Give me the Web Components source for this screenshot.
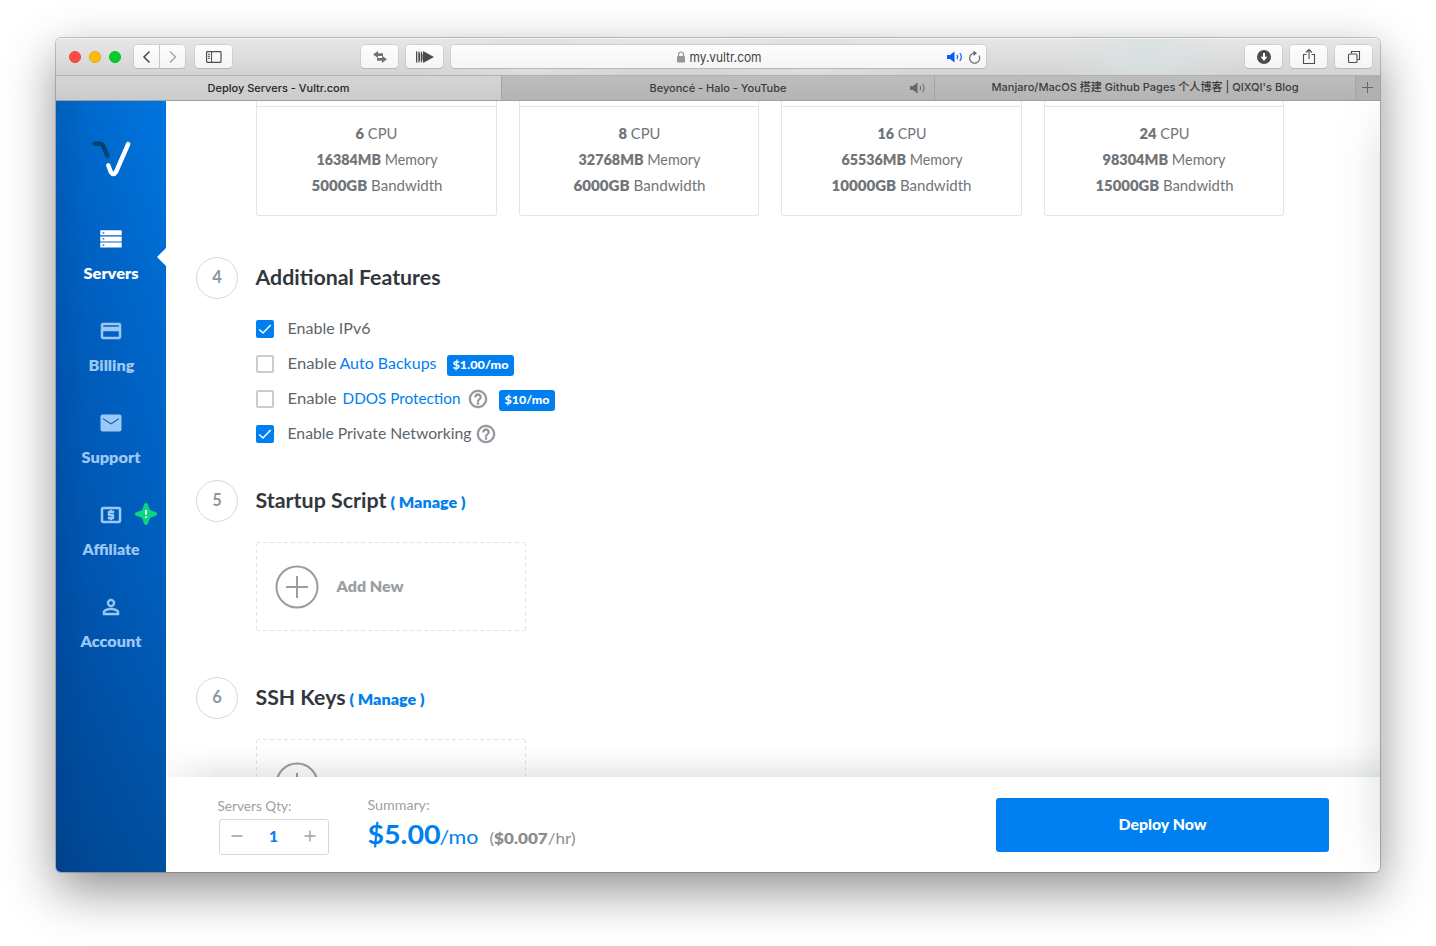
<!DOCTYPE html>
<html lang="en">
<head>
<meta charset="utf-8">
<title>Deploy Servers - Vultr.com</title>
<style>
html,body{margin:0;height:100%;background:#fff;overflow:hidden}
body{font-family:Lato,"Noto Sans CJK SC",sans-serif;box-sizing:border-box;padding:38px 56px 74px}
</style>
</head>
<body>
<app-window></app-window>
<script>
const define = (name, html, setup) => customElements.define(name, class extends HTMLElement {
  connectedCallback() {
    if (this.shadowRoot) return;
    const t = document.createElement('template');
    t.innerHTML = typeof html === 'function' ? html(this) : html;
    this.attachShadow({mode: 'open'}).append(t.content.cloneNode(true));
    if (setup) setup(this);
  }
});

define('tool-button', `
<style>
:host{display:flex;box-sizing:border-box;width:37px;height:23px;border-radius:4px;background:linear-gradient(#fdfdfd,#f5f5f5);box-shadow:0 0 0 .5px #bdbdbd,0 1px 0 #b2b2b2;align-items:center;justify-content:center;color:#4d4d4d}
</style><slot></slot>`);

define('browser-toolbar', `
<style>
:host{--dy:0px;display:flex;align-items:center;height:37px;border-bottom:1px solid #b1b1b1;padding:0 8px 0 13px;box-sizing:content-box;
background:radial-gradient(ellipse 110px 40px at 475px 20px,#dbe1e2,transparent),radial-gradient(ellipse 110px 40px at 755px 20px,#dbe1e2,transparent),radial-gradient(ellipse 90px 40px at 1090px 20px,#d9e0e0,transparent),linear-gradient(#e7e7e7,#d3d3d3);box-shadow:inset 0 1px #f3f3f3}
i{width:12px;height:12px;border-radius:50%;box-sizing:border-box;margin-right:8px}
.r{background:#ff4b43;border:1px solid #e8403a}.y{background:#ffbd05;border:1px solid #e8a905}.g{background:#00cf26;border:1px solid #06bb22;margin-right:13px}
.b{width:25px;border-radius:4px 0 0 4px}.f{width:25px;border-radius:0 4px 4px 0;margin:0 10px 0 1px}
.swap{margin:0 8px 0 129px}.url{width:535px;margin:0 259px 0 8px;display:grid;grid-template-columns:1fr auto 1fr;align-items:center}
.t{display:flex;align-items:center;gap:4px;font:13px Inter,sans-serif;color:#3f3f3f}
.e{display:flex;justify-content:flex-end;align-items:center;gap:4px;padding-right:5px}
.m{margin-left:8px}svg{display:block;fill:none;stroke:currentColor}
</style>
<i class="r"></i><i class="y"></i><i class="g"></i>
<tool-button class="b"><svg width="12" height="16" stroke-width="1.6"><path d="M8.500 2.500 3 8l5.500 5.500"/></svg></tool-button>
<tool-button class="f"><svg width="12" height="16" stroke-width="1.4" style="color:#a5a5a5"><path d="M3 2.500 8.500 8l-5.500 5.500"/></svg></tool-button>
<tool-button><svg width="16" height="14"><rect x=".6" y="1.6" width="14.4" height="10.8" rx=".8" stroke-width="1.2"/><path d="M5.6 2v10M2 4.3h2M2 6.3h2M2 8.3h2" /></svg></tool-button>
<tool-button class="swap"><svg width="16" height="14" style="stroke:none;fill:#727272"><path d="M1 4.500 6 1v2.200h5v2.700H6V8zM15 9.300l-5 3.700v-2.300H5V8h5V5.800z"/></svg></tool-button>
<tool-button><svg width="18" height="14" style="stroke:none;fill:#4b4b4b"><path d="M0 1.500h1.300v11H0zM2.300 1.500h1l.8 3v5l-.8 3h-1zM4.800 1.500h.8l1 3v5l-1 3h-.8zM7 1l11 6-11 6z"/></svg></tool-button>
<tool-button class="url" style="display:grid"><span></span><span class="t"><svg width="9" height="12" style="stroke:none;fill:#979797"><rect x="0" y="5" width="8" height="6.500" rx=".8"/><path d="M1.500 5.500V3.500a2.500 2.500 0 0 1 5 0v2" fill="none" stroke="#979797" stroke-width="1.200"/></svg><fit-text w="71">my.vultr.com</fit-text></span>
<span class="e"><svg width="17" height="12" style="color:#0a5cff"><path d="M0 4h3l4.500-3.500v11L3 8H0z" fill="#0a5cff" stroke="none"/><path d="M10 3.800q1.500 2.200 0 4.400M12.800 2q3 4 0 8" stroke-width="1.200"/></svg><svg width="13" height="14" style="color:#6c6c6c"><path d="M10.900 5.500A5 5 0 1 1 6 3.200h2" stroke-width="1.200"/><path d="M5.500.500 9 3.200 5.500 6z" fill="#6c6c6c" stroke="none"/></svg></span></tool-button>
<tool-button><svg width="16" height="16"><circle cx="8" cy="8" r="7" fill="#4b4b4b" stroke="none"/><path d="M8 4v4.500" stroke="#fff" stroke-width="2"/><path d="M4.500 7.800h7L8 12z" fill="#fff" stroke="none"/></svg></tool-button>
<tool-button class="m"><svg width="14" height="18" stroke-width="1.100"><path d="M4.500 6.500h-3v9h11v-9h-3M7 11V1.500M4 4.500l3-3 3 3"/></svg></tool-button>
<tool-button class="m"><svg width="14" height="14" stroke-width="1.100"><rect x="1.500" y="4" width="8.500" height="8.500" rx="1"/><path d="M4.500 3.500V1.500h8v8h-2"/></svg></tool-button>
`);

define('browser-tabs', `
<style>
:host{--dy:0px;display:flex;height:24px;border-bottom:1px solid #9f9f9f;font:500 11px/14px Inter,"Noto Sans CJK SC",sans-serif;color:#3c3c3c;background:linear-gradient(#bdbdbd,#b4b4b4)}
div{display:flex;align-items:center;justify-content:center;border-right:1px solid #a3a3a3;box-sizing:border-box;position:relative}
.a{width:446px;background:linear-gradient(#d5d5d5,#cbcbcb);color:#262626}.b{width:433px}.c{width:421px;--dy:-1px}.d{width:24px;border:0;background:#b0b0b0}
svg{fill:none;stroke:#666}.b svg{position:absolute;right:7px;top:6px}
</style>
<div class="a"><fit-text w="141">Deploy Servers - Vultr.com</fit-text></div>
<div class="b"><fit-text w="136">Beyoncé - Halo - YouTube</fit-text><svg width="17" height="12"><path d="M0 4h3l4.500-3.500v11L3 8H0z" fill="#666" stroke="none"/><path d="M10 3.800q1.500 2.200 0 4.400M12.800 2q3 4 0 8"/></svg></div>
<div class="c"><fit-text w="306">Manjaro/MacOS 搭建 Github Pages 个人博客 | QIXQI's Blog</fit-text></div>
<div class="d"><svg width="12" height="12"><path d="M5.500 0v11M0 5.500h11" stroke-width="1"/></svg></div>`);

define('nav-item', e => `
<style>
:host{display:flex;flex-direction:column;align-items:center;height:92px;color:#9cc8f5;position:relative;font-weight:800;font-size:15px}
:host([active]){color:#fff}
svg{display:block;width:24px;height:24px;fill:currentColor;fill-rule:evenodd}
:host([heavy]) svg{stroke:currentColor;stroke-width:.5}
.l{height:22px;line-height:22px;margin-top:12px}
.p{position:absolute;right:0;top:21px;border:9.500px solid transparent;border-right-color:#fff;border-left:0}
</style>
<svg viewBox="0 0 24 24"><path d="${e.getAttribute('icon')}"/></svg><span class="l"><fit-text w="${e.getAttribute('w')}">${e.getAttribute('label')}</fit-text></span>
${e.hasAttribute('active') ? '<span class="p"></span>' : ''}<slot></slot>`);

define('side-bar', `
<style>
:host{display:block;width:110px;box-sizing:border-box;padding-top:36px;flex:none;
background:linear-gradient(90deg,rgba(0,20,75,.24),rgba(0,20,75,.13) 30px,rgba(0,20,75,.09) 55px,transparent),linear-gradient(184deg,#0076e0 0,#0068cd 30%,#005fbf 60%,#004f9f 100%)}
.logo{display:block;margin:0 auto 54px;width:44px;height:44px}
.n{margin-top:-8px;display:block}
.s{position:absolute;left:78px;top:-1px;width:24px;height:24px}
</style>
<svg class="logo" viewBox="0 0 44 44" fill="none" stroke-linecap="round" stroke-linejoin="round" stroke-width="4.400"><path d="M5.500 6.800h6q1.600 0 2.300 1.500L18.500 19" stroke="#00456f" stroke-linecap="round"/><path d="M39.200 7 27 35q-2.600 4-5.200 0L19.300 28.200" stroke="#fff"/></svg>
<div class="n">
<nav-item active label="Servers" w="54" icon="M1.300 3.200h21.400v5H1.300zM3.600 5.200v1.200h1.700V5.200zM1.300 9.400h21.400v5H1.300zM3.600 11.300v1.200h1.700v-1.200zM1.300 15.600h21.400v5H1.300zM3.600 17.500v1.200h1.700v-1.200z"></nav-item>
<nav-item heavy label="Billing" w="45" icon="M20 4H4C2.890 4 2.010 4.890 2.010 6L2 18c0 1.110.890 2 2 2h16c1.110 0 2-.890 2-2V6c0-1.110-.890-2-2-2zm0 14H4v-6h16v6zm0-10H4V6h16v2z"></nav-item>
<nav-item label="Support" w="58" icon="M20.500 3.500h-17c-1.100 0-2 .900-2 2v13c0 1.100.900 2 2 2h17c1.100 0 2-.900 2-2v-13c0-1.100-.900-2-2-2zM20 7l-8 5.200L4 7v1.200l8 5.200 8-5.200z"></nav-item>
<nav-item heavy label="Affiliate" w="56" icon="M11 17h2v-1h1c.550 0 1-.450 1-1v-3c0-.550-.450-1-1-1h-3v-1h4V8h-2V7h-2v1h-1c-.550 0-1 .450-1 1v3c0 .550.450 1 1 1h3v1H9v2h2v1zm9-13H4c-1.110 0-1.990.890-1.990 2L2 18c0 1.110.890 2 2 2h16c1.110 0 2-.890 2-2V6c0-1.110-.890-2-2-2zm0 14H4V6h16v12z"><svg class="s" viewBox="0 0 24 24"><path d="M12 1c1.400 0 2 1 2.500 3.200l1.300 3.400q.3.700 1 1l3.200 1c2.300.700 3 1.200 3 2.400s-.700 1.700-3 2.400l-3.200 1q-.7.300-1 1L14.500 20c-.5 2-1.100 3-2.500 3s-2-1-2.500-3l-1.300-3.600q-.3-.7-1-1l-3.200-1C1.700 13.700 1 13.200 1 12s.700-1.700 3-2.400l3.200-1q.7-.3 1-1l1.300-3.400C10 2 10.600 1 12 1z" fill="#0cd57e"/><path d="M12 8v4.500M12 14.500v1.500" stroke="#fff" stroke-width="2"/></svg></nav-item>
<nav-item heavy label="Account" w="60" icon="M12 5.900c1.160 0 2.100.940 2.100 2.100s-.940 2.100-2.100 2.100S9.900 9.160 9.900 8s.940-2.100 2.100-2.100m0 9c2.970 0 6.100 1.460 6.100 2.100v1.100H5.900V17c0-.640 3.130-2.100 6.100-2.100M12 4C9.790 4 8 5.790 8 8s1.790 4 4 4 4-1.790 4-4-1.790-4-4-4zm0 9c-2.670 0-8 1.340-8 4v3h16v-3c0-2.660-5.330-4-8-4z"></nav-item>
</div>`);

define('plan-card', e => {
  const rows = e.getAttribute('rows').split(',').map(r => r.split(':'));
  return `<style>
:host{display:block;box-sizing:border-box;height:115px;border:1px solid #e3e5e8;border-top:0;border-radius:0 0 3px 3px;color:#717579;font-size:15px;text-align:center}
header{height:5px;border-bottom:1px solid #e3e5e8;margin-bottom:14px}
p{margin:0;height:26px;line-height:26px}b{font-weight:800}
</style><header></header>` + rows.map(([n, u, w]) => `<p><fit-text w="${w}"><b>${n}</b> ${u}</fit-text></p>`).join('');
});

define('step-head', e => `
<style>
:host{display:flex;align-items:center;height:42px;color:#32373d;font-weight:700;font-size:20.500px}
i{font-style:normal;font-size:16.500px;font-weight:700;color:#8d979f;width:42px;height:42px;box-sizing:border-box;border:1px solid #d3dae0;border-radius:50%;text-align:center;line-height:39px;margin-right:18px}
.m{color:#007fec;font-size:15px;font-weight:800;margin-left:5px}
.t{display:flex;align-items:baseline}
</style>
<i>${e.getAttribute('n')}</i><span class="t"><fit-text w="${e.getAttribute('w')}">${e.getAttribute('label')}</fit-text>
${e.hasAttribute('manage') ? '<fit-text class="m" w="74">( Manage )</fit-text>' : ''}</span>`);

define('check-row', e => `
<style>
:host{display:flex;align-items:center;height:35px;font-size:15.500px;color:#5f6469}
.c{width:18px;height:18px;box-sizing:border-box;border:2px solid #c9cccf;border-radius:2px;margin-right:14px}
:host([checked]) .c{background:#0080f0;border-color:#0080f0}
svg{display:block;margin:0}
</style>
<span class="c">${e.hasAttribute('checked') ? '<svg width="14" height="14" fill="none" stroke="#fff" stroke-width="1.500"><path d="m1.200 7.500 3.800 3.500 7.700-8"/></svg>' : ''}</span><slot></slot>`);

define('help-icon', `
<style>:host{display:block;width:18px;height:18px}svg{display:block;overflow:visible}</style>
<svg width="18" height="18" viewBox="2 2 20 20" fill="#8e949a" stroke="#8e949a" stroke-width=".5"><path d="M11 18h2v-2h-2v2zm1-16C6.480 2 2 6.480 2 12s4.480 10 10 10 10-4.480 10-10S17.520 2 12 2zm0 18c-4.410 0-8-3.590-8-8s3.590-8 8-8 8 3.590 8 8-3.590 8-8 8zm0-14c-2.210 0-4 1.790-4 4h2c0-1.100.900-2 2-2s2 .900 2 2c0 2-3 1.750-3 5h2c0-2.250 3-2.500 3-5 0-2.210-1.790-4-4-4z"/></svg>`);

define('price-badge', `
<style>:host{--dy:0px;display:block;height:21px;box-sizing:border-box;margin-top:3px;background:#0080f0;border-radius:3px;color:#fff;font-size:11px;font-weight:900;line-height:20px;padding:0 6px}</style><slot></slot>`);

define('add-box', `
<style>
:host{display:flex;align-items:center;box-sizing:border-box;width:270px;height:89px;font-size:15px;font-weight:800;color:#9a9fa4;background:repeating-linear-gradient(90deg,#e1e3e5 0 4px,transparent 4px 7px) 0 0/100% 1px no-repeat,repeating-linear-gradient(90deg,#e1e3e5 0 4px,transparent 4px 7px) 0 100%/100% 1px no-repeat,repeating-linear-gradient(#e1e3e5 0 4px,transparent 4px 7px) 0 0/1px 100% no-repeat,repeating-linear-gradient(#e1e3e5 0 4px,transparent 4px 7px) 100% 0/1px 100% no-repeat;padding-left:19px;border-radius:3px}
svg{margin-right:18px}
</style>
<svg width="44" height="44" fill="none" stroke="#979da3" stroke-width="2"><circle cx="22" cy="22" r="20.500"/><path d="M22 11v22M11 22h22"/></svg><fit-text w="66">Add New</fit-text>`);

define('deploy-form', `
<style>
:host{display:block;flex:1;min-height:0;overflow:hidden;padding-left:30px;position:relative}
.cards{display:grid;grid-template-columns:241px 240px 241px 240px;gap:22px;margin:0 0 41px 60px}
.in{margin-left:60px}
.rows{margin:12px 0 29px 60px}
a{color:#007fec}
.shade{position:absolute;inset:auto 0 0 0;height:36px;background:linear-gradient(transparent,rgba(40,60,55,.025) 40%,rgba(40,60,55,.11));-webkit-mask:linear-gradient(90deg,rgba(0,0,0,.3),#000 50px)}
</style>
<div class="cards">
<plan-card rows="6:CPU:41,16384MB:Memory:120,5000GB:Bandwidth:130"></plan-card>
<plan-card rows="8:CPU:41,32768MB:Memory:121,6000GB:Bandwidth:131"></plan-card>
<plan-card rows="16:CPU:48,65536MB:Memory:120,10000GB:Bandwidth:139"></plan-card>
<plan-card rows="24:CPU:49,98304MB:Memory:122,15000GB:Bandwidth:137"></plan-card>
</div>
<step-head n="4" label="Additional Features" w="184"></step-head>
<div class="rows">
<check-row checked><fit-text w="82">Enable IPv6</fit-text></check-row>
<check-row><fit-text w="48">Enable</fit-text><a style="margin:0 11px 0 4px"><fit-text w="96">Auto Backups</fit-text></a><price-badge><fit-text w="55">$1.00/mo</fit-text></price-badge></check-row>
<check-row><fit-text w="48">Enable</fit-text><a style="margin:0 9px 0 7px"><fit-text w="117">DDOS Protection</fit-text></a><help-icon style="margin-right:12px"></help-icon><price-badge><fit-text w="44">$10/mo</fit-text></price-badge></check-row>
<check-row checked><fit-text w="183" style="margin-right:6px">Enable Private Networking</fit-text><help-icon></help-icon></check-row>
</div>
<step-head n="5" label="Startup Script" w="130" manage></step-head>
<add-box class="in" style="margin-top:20px;margin-bottom:46px"></add-box>
<step-head n="6" label="SSH Keys" w="89" manage></step-head>
<add-box class="in" style="margin-top:20px"></add-box>
<div class="shade"></div>`);

define('deploy-footer', `
<style>
:host{--dy:0px;display:flex;height:95px;box-sizing:border-box;background:#fff;padding:21px 51px 0 52px;color:#9a9fa4;font-size:13px;line-height:16px}
.q{width:150px}.box{box-sizing:border-box;width:110px;height:36px;margin:5px 0 0 1px;border:1px solid #d5d8da;border-radius:3px;display:flex;align-items:center;justify-content:space-between;padding:0 12px 2px 11px;font-size:15.500px;font-weight:900;color:#0080f0}
.lab{height:16px}.s{flex:1;margin-top:-1px}
.p{display:flex;align-items:baseline;color:#0080f0;font-size:26px;font-weight:700;line-height:34px;margin-top:4px}
.u{font-size:20px;font-weight:400;margin-right:12px}.h{font-size:15.500px;font-weight:400;color:#8e8e8e}
button{--dy:-1px;border:0;width:333px;height:54px;border-radius:3px;background:#0080f0;color:#fff;font:900 15px Lato,sans-serif;padding:0}
</style>
<div class="q"><div class="lab"><fit-text w="73">Servers Qty:</fit-text></div><div class="box"><svg width="12" height="12" stroke="#9a9fa4" stroke-width="1.400"><path d="M.500 6h11"/></svg><span>1</span><svg width="12" height="12" stroke="#9a9fa4" stroke-width="1.400"><path d="M.500 6h11M6 .500v11"/></svg></div></div>
<div class="s"><div class="lab"><fit-text w="61">Summary:</fit-text></div><div class="p"><fit-text w="72">$5.00</fit-text><fit-text class="u" w="38">/mo</fit-text><fit-text class="h" w="85">(<b style="font-weight:800">$0.007</b>/hr)</fit-text></div></div>
<button><fit-text w="87">Deploy Now</fit-text></button>`);

define('app-window', `
<style>
:host{display:flex;flex-direction:column;width:1324px;height:834px;border-radius:5px;background:#fff;position:relative;box-shadow:0 0 0 1px rgba(0,0,0,.2),0 18px 50px rgba(0,0,0,.44)}
.clip{display:flex;flex-direction:column;flex:1;min-height:0;border-radius:5px;overflow:hidden}
.body{display:flex;flex:1;min-height:0;position:relative}
main{flex:1;display:flex;flex-direction:column;min-width:0}
.edge{position:absolute;inset:0 0 0 auto;width:46px;background:linear-gradient(90deg,transparent,rgba(30,50,50,.02) 50%,rgba(30,50,50,.085));-webkit-mask:linear-gradient(rgba(0,0,0,.15),#000 60px,#000 720px,rgba(0,0,0,.4))}
</style>
<div class="clip"><browser-toolbar></browser-toolbar><browser-tabs></browser-tabs>
<div class="body"><side-bar></side-bar><main><deploy-form></deploy-form><deploy-footer></deploy-footer></main><div class="edge"></div></div></div>`);

/* Widens or narrows its glyphs so that the line fills the width given in "w". */
define('fit-text', `<style>:host{display:inline-block;white-space:nowrap;text-align:left}span{display:inline-block;transform-origin:0 50%}</style><span><slot></slot></span>`, el => {
  const w = +el.getAttribute('w');
  const span = el.shadowRoot.querySelector('span');
  const natural = span.getBoundingClientRect().width;
  el.style.width = w + 'px';
  span.style.transform = `translate(-.5px,var(--dy,-1px)) scaleX(${((w + 1) / natural).toFixed(4)})`;
});
</script>
</body>
</html>
